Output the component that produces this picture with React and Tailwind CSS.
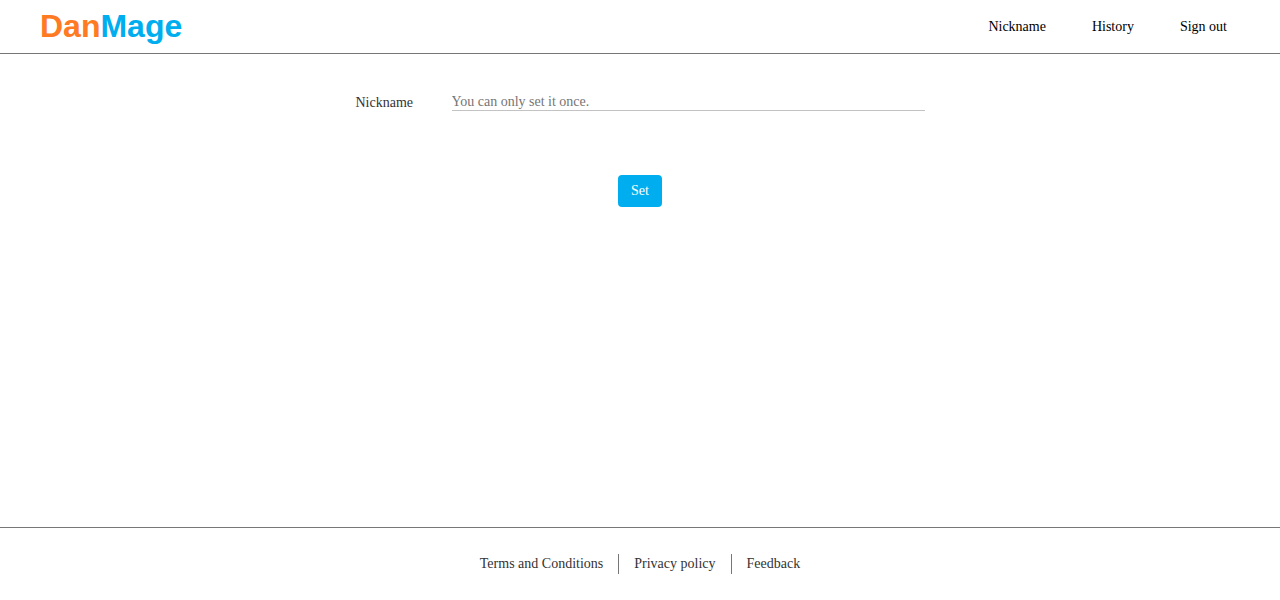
const navItems = ["Nickname", "History", "Sign out"];
const footerItems = ["Terms and Conditions", "Privacy policy", "Feedback"];

export default function App() {
  return (
    <div className="flex min-h-screen flex-col bg-white font-['Liberation_Serif',serif] text-sm leading-4 text-[#333333]">
      <header className="flex items-center justify-between border-b border-[#777777] px-10 py-2">
        <a href="#home" className="font-['Liberation_Sans',sans-serif] text-[32px] leading-[37px] font-bold text-[#ff7a22]">
          Dan<span className="text-[#00aeef]">Mage</span>
        </a>
        <nav className="flex gap-5 text-black">
          {navItems.map((item) => (
            <a key={item} href="#nav" className="px-[13px] py-2">{item}</a>
          ))}
        </nav>
      </header>
      <main className="flex-1 px-5 pt-10">
        <form className="mx-auto flex max-w-[569px] flex-col" onSubmit={(e) => e.preventDefault()}>
          <div className="flex items-end">
            <label htmlFor="nickname" className="w-24 shrink-0">Nickname</label>
            <input
              id="nickname"
              type="text"
              placeholder="You can only set it once."
              className="min-w-0 flex-1 border-b border-[#c3c3c3] leading-4 outline-none placeholder:text-[#757575]"
            />
          </div>
          <button type="submit" className="mt-16 self-center rounded bg-[#00aeef] px-[13px] py-2 text-white">Set</button>
        </form>
      </main>
      <footer className="flex justify-center border-t border-[#777777] pt-[26px] pb-[26px]">
        {footerItems.map((item, i) => (
          <a key={item} href="#info" className={i ? "border-l border-[#777777] px-[15px] leading-5" : "px-[15px] leading-5"}>
            {item}
          </a>
        ))}
      </footer>
    </div>
  );
}
